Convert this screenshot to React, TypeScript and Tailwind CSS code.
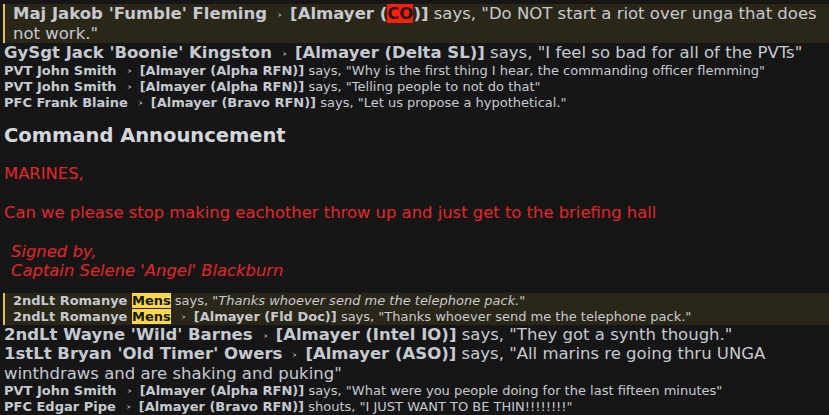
import React from 'react';

const font = { fontFamily: '"DejaVu Sans", Verdana, sans-serif' };

function Radio() {
  return (
    <svg width="8" height="8" viewBox="0 0 8 8" className="inline-block ml-[9px] mr-[6px] align-[0px]">
      <path d="M1 1 L6 4 L1 7 L3 4 Z" fill="#5e5e5e" />
      <rect x="3" y="3" width="2" height="2" fill="#8c8c8c" />
    </svg>
  );
}

type LineProps = {
  name: React.ReactNode;
  chan?: React.ReactNode;
  verb?: string;
  text: React.ReactNode;
  big?: boolean;
};

function Line({ name, chan, verb = 'says', text, big }: LineProps) {
  return (
    <div className={big ? 'text-[16.5px] leading-[19.5px]' : 'text-[13px] leading-4'}>
      <span className="font-bold">{name}</span>
      <Radio />
      <span className="font-bold">[{chan}]</span> {verb}, {text}
    </div>
  );
}

export default function App() {
  return (
    <div
      className="w-[829px] h-[415px] overflow-hidden bg-[#161616] text-[#c6cad0] pl-[4px] pr-[4px]"
      style={font}
    >
      <div className="mt-[4px] -ml-px border-l-2 border-[#e6c34a] bg-[#2b2718] pl-[8px] -mr-[4px]">
        <Line
          big
          name="Maj Jakob 'Fumble' Fleming"
          chan={<>Almayer (<span className="bg-[#ff1e0a] text-[#2a1410]">CO</span>)</>}
          text={'"Do NOT start a riot over unga that does not work."'}
        />
      </div>
      <Line big name="GySgt Jack 'Boonie' Kingston" chan="Almayer (Delta SL)" text={'"I feel so bad for all of the PVTs"'} />
      <Line name="PVT John Smith" chan="Almayer (Alpha RFN)" text={'"Why is the first thing I hear, the commanding officer flemming"'} />
      <Line name="PVT John Smith" chan="Almayer (Alpha RFN)" text={'"Telling people to not do that"'} />
      <Line name="PFC Frank Blaine" chan="Almayer (Bravo RFN)" text={'"Let us propose a hypothetical."'} />

      <div className="mt-[13px] text-[19.5px] leading-[23px] font-bold text-[#d4d7db]">Command Announcement</div>
      <div className="mt-[17px] text-[16.4px] leading-[19.5px] text-[#e3272b]">
        <div>MARINES,</div>
        <div className="h-[19.5px]" />
        <div>Can we please stop making eachother throw up and just get to the briefing hall</div>
        <div className="h-[19.5px]" />
        <div className="italic pl-[7px]">
          <div>Signed by,</div>
          <div>Captain Selene 'Angel' Blackburn</div>
        </div>
      </div>

      <div className="mt-[12px] -ml-px border-l-2 border-[#e6c34a] bg-[#2b2718] pl-[8px] -mr-[4px] text-[13px] leading-4">
        <div>
          <span className="font-bold">2ndLt Romanye <span className="bg-[#ffd84a] text-[#0c1a08]">Mens</span></span> says, "<span className="italic">Thanks whoever send me the telephone pack.</span>"
        </div>
        <div>
          <span className="font-bold">2ndLt Romanye <span className="bg-[#ffd84a] text-[#0c1a08]">Mens</span></span>
          <Radio />
          <span className="font-bold">[Almayer (Fld Doc)]</span> says, "Thanks whoever send me the telephone pack."
        </div>
      </div>
      <Line big name="2ndLt Wayne 'Wild' Barnes" chan="Almayer (Intel IO)" text={'"They got a synth though."'} />
      <Line big name="1stLt Bryan 'Old Timer' Owers" chan="Almayer (ASO)" text={'"All marins re going thru UNGA winthdraws and are shaking and puking"'} />
      <Line name="PVT John Smith" chan="Almayer (Alpha RFN)" text={'"What were you people doing for the last fifteen minutes"'} />
      <Line name="PFC Edgar Pipe" chan="Almayer (Bravo RFN)" verb="shouts" text={'"I JUST WANT TO BE THIN!!!!!!!!"'} />
    </div>
  );
}
